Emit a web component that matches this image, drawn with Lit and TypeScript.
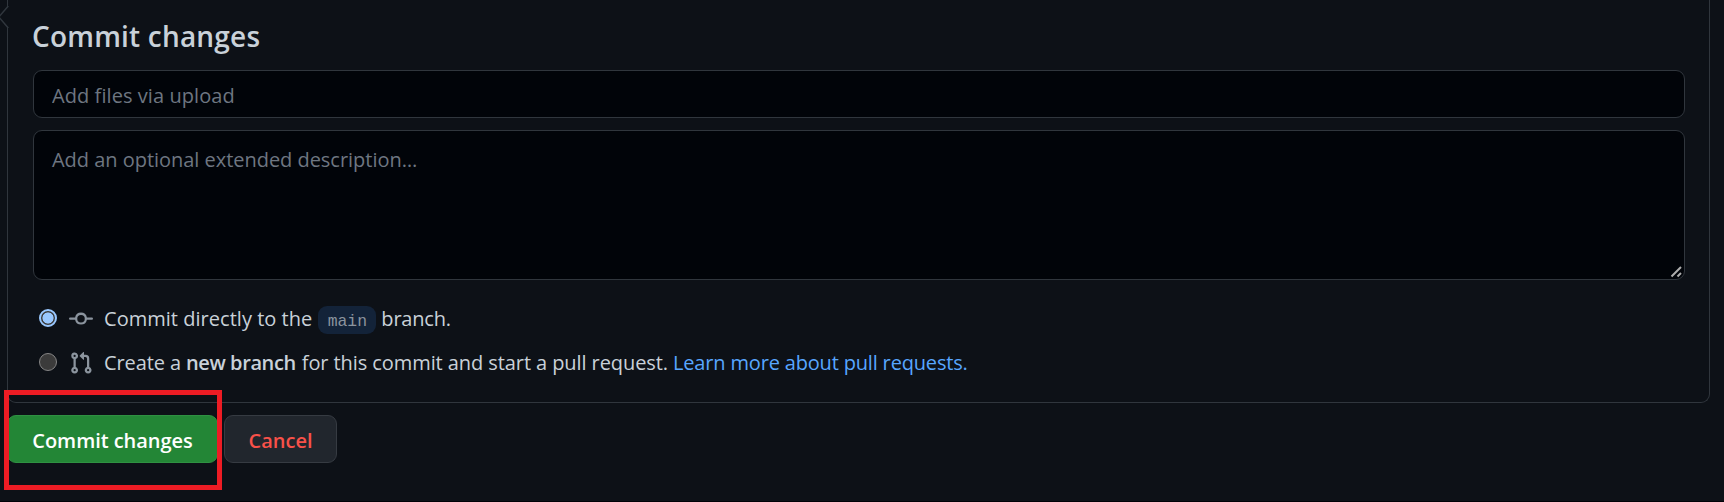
import { LitElement, html, css } from "lit";
import { customElement, state } from "lit/decorators.js";

type Target = "direct" | "branch";

@customElement("app-root")
export class AppRoot extends LitElement {
  static styles = css`
    :host {
      display: block;
      position: relative;
      box-sizing: border-box;
      height: 502px;
      overflow: hidden;
      padding-left: 7px;
      background: #0d1117;
      border-bottom: 1px solid #010107;
      color: #c9d1d9;
      font: 20px/32px "Open Sans", "Noto Sans", sans-serif;
    }
    * { box-sizing: border-box; }
    .panel {
      width: 1703px;
      height: 403px;
      padding: 15px 24px 0 25px;
      border: 1px solid #30363d;
      border-top: 0;
      border-radius: 0 0 9px 9px;
    }
    .notch { position: absolute; left: 0; top: 0; }
    h3 { margin: 0 0 0 -1px; font-size: 28px; line-height: 42px; font-weight: 650; letter-spacing: 0.2px; }
    .field {
      display: block;
      width: 100%;
      margin: 0;
      border: 1px solid #30363d;
      border-radius: 9px;
      background: #010409;
      color: #c9d1d9;
      font: inherit;
      outline: none;
    }
    .field::placeholder { color: #6e7681; opacity: 1; }
    .summary { height: 48px; margin-top: 13px; padding: 2px 18px 0; letter-spacing: 0.07px; }
    .extended { position: relative; margin-top: 12px; }
    .description {
      height: 150px;
      padding: 14px 18px;
      line-height: 30px;
      letter-spacing: -0.03px;
      resize: none;
      overflow: hidden;
    }
    .grip { position: absolute; right: 3px; bottom: 2px; }
    .choices { display: grid; gap: 12px; margin-top: 22px; padding-left: 6px; }
    .choice { display: flex; align-items: center; height: 32px; }
    .radio {
      appearance: none;
      flex: none;
      width: 18px;
      height: 18px;
      margin: 0;
      border: 1px solid #858585;
      border-radius: 50%;
      background: #3b3b3b;
    }
    .radio:checked {
      border: 2px solid #99c8ff;
      background: radial-gradient(circle, #99c8ff 5.2px, #3b3b3b 5.9px);
    }
    .icon { flex: none; width: 24px; height: 24px; margin: 2px 11px 0 12px; fill: #8b949e; }
    .words { display: flex; align-items: baseline; padding-top: 2px; white-space: nowrap; }
    .lead { letter-spacing: 0.03px; }
    .chip {
      width: 58px;
      height: 28px;
      margin: 0 5px 0 6px;
      border-radius: 9px;
      background: #132339;
      color: #8b949e;
      font: 16.4px/31px "Liberation Mono", monospace;
      text-align: center;
    }
    .tail { letter-spacing: -0.2px; }
    .create { letter-spacing: -0.1px; }
    .strong { margin: 0 6px 0 5px; font-weight: 650; letter-spacing: -0.4px; }
    .rest { letter-spacing: -0.08px; }
    .link { margin-left: 5px; color: #58a6ff; letter-spacing: -0.17px; text-decoration: none; }
    .actions { display: flex; gap: 6px; margin-top: 12px; }
    .button {
      height: 48px;
      padding: 4px 0 0;
      border: 1px solid #363b42;
      border-radius: 9px;
      background: #21262d;
      color: #f85149;
      font: inherit;
      font-weight: 650;
    }
    .primary { width: 211px; border-color: #2f9142; background: #238636; color: #fff; letter-spacing: -0.05px; }
    .cancel { width: 113px; }
    .highlight {
      position: absolute;
      left: 4px;
      top: 390px;
      width: 218px;
      height: 100px;
      border: 5px solid #ed1c24;
      pointer-events: none;
    }
  `;

  @state() private target: Target = "direct";

  private radio(value: Target) {
    return html`<input class="radio" type="radio" name="target" .checked=${this.target === value}
      @change=${() => (this.target = value)} />`;
  }

  render() {
    return html`
      <section class="panel">
        <h3>Commit changes</h3>
        <input class="field summary" placeholder="Add files via upload" />
        <div class="extended">
          <textarea class="field description" placeholder="Add an optional extended description…"></textarea>
          <svg class="grip" width="12" height="12" viewBox="0 0 12 12" fill="none" stroke="#adadad" stroke-width="2">
            <path d="M1.5 10.5L11 1M7.5 10.5L11 7" />
          </svg>
        </div>
        <div class="choices">
          <label class="choice">
            ${this.radio("direct")}
            <svg class="icon" viewBox="0 0 16 16"><path fill-rule="evenodd" d="M10.5 7.75a2.5 2.5 0 11-5 0 2.5 2.5 0 015 0zm1.43.75a4.002 4.002 0 01-7.86 0H.75a.75.75 0 110-1.5h3.32a4.001 4.001 0 017.86 0h3.32a.75.75 0 110 1.5h-3.32z" /></svg>
            <span class="words"><span class="lead">Commit directly to the</span><span class="chip">main</span><span class="tail">branch.</span></span>
          </label>
          <label class="choice">
            ${this.radio("branch")}
            <svg class="icon" viewBox="0 0 16 16"><path fill-rule="evenodd" d="M7.177 3.073L9.573.677A.25.25 0 0110 .854v4.792a.25.25 0 01-.427.177L7.177 3.427a.25.25 0 010-.354zM3.75 2.5a.75.75 0 100 1.5.75.75 0 000-1.5zm-2.25.75a2.25 2.25 0 113 2.122v5.256a2.251 2.251 0 11-1.5 0V5.372A2.25 2.25 0 011.5 3.25zM11 2.5h-1V4h1a1 1 0 011 1v5.628a2.251 2.251 0 101.5 0V5A2.5 2.5 0 0011 2.5zm1 10.25a.75.75 0 111.5 0 .75.75 0 01-1.5 0zM3.75 12a.75.75 0 100 1.5.75.75 0 000-1.5z" /></svg>
            <span class="words"><span class="create">Create a</span><b class="strong">new branch</b><span class="rest">for this commit and start a pull request.</span><a class="link">Learn more about pull requests.</a></span>
          </label>
        </div>
      </section>
      <div class="actions">
        <button class="button primary">Commit changes</button>
        <button class="button cancel">Cancel</button>
      </div>
      <svg class="notch" width="12" height="32" viewBox="0 0 12 32">
        <path d="M9 5.5L-1.2 17L9 28.5Z" fill="#0d1117" />
        <path d="M8.3 6L-1.2 17L8.3 28" fill="none" stroke="#30363d" stroke-width="1.5" />
      </svg>
      <div class="highlight"></div>
    `;
  }
}
